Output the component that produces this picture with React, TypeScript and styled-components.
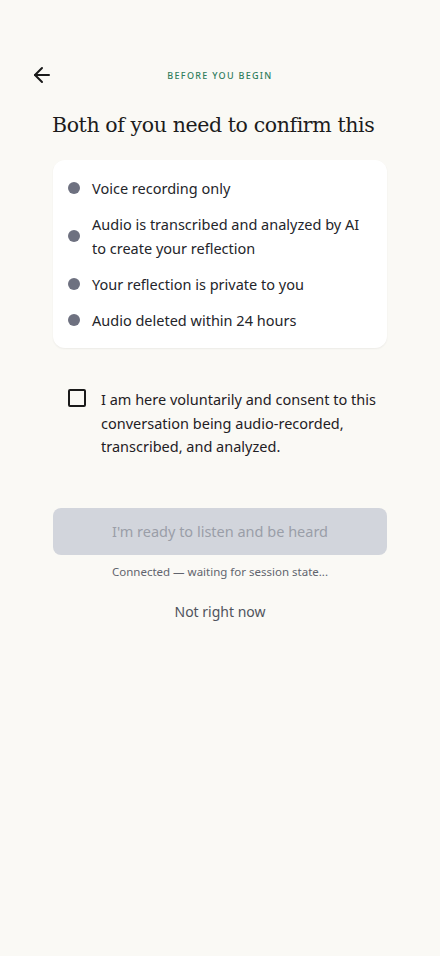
import styled, { createGlobalStyle } from "styled-components";
import { useState } from "react";
import { ArrowLeft } from "lucide-react";

const GlobalStyle = createGlobalStyle`
  html, body {
    margin: 0;
    padding: 0;
    background: #faf9f5;
  }
  * {
    box-sizing: border-box;
  }
`;

const Page = styled.div`
  min-height: 956px;
  background: #faf9f5;
  font-family: "Noto Sans", "Open Sans", sans-serif;
  color: #1f2024;
  padding: 63px 53px 40px;
  display: flex;
  flex-direction: column;
`;

const TopBar = styled.div`
  position: relative;
  display: flex;
  align-items: center;
  justify-content: center;
  height: 24px;
`;

const BackButton = styled.button`
  position: absolute;
  left: -23px;
  top: 0;
  background: none;
  border: none;
  padding: 0;
  display: flex;
  color: #1a1a1a;
  cursor: pointer;
`;

const Eyebrow = styled.div`
  font-size: 9px;
  letter-spacing: 1.3px;
  text-transform: uppercase;
  color: #2f7d5c;
  font-weight: 500;
`;

const Heading = styled.h1`
  margin: 26px 0 23px -1px;
  font-family: "DejaVu Serif", "Liberation Serif", serif;
  font-weight: 400;
  font-size: 20.5px;
  letter-spacing: -0.4px;
  text-align: left;
  color: #1c1c1c;
`;

const Card = styled.ul`
  list-style: none;
  margin: 0;
  padding: 16px 20px 16px 15px;
  background: #ffffff;
  border-radius: 12px;
  box-shadow: 0 1px 2px rgba(0, 0, 0, 0.06);
  display: flex;
  flex-direction: column;
  gap: 12px;
`;

const Item = styled.li`
  display: flex;
  align-items: center;
  gap: 12px;
  font-size: 14.5px;
  line-height: 24px;
  color: #24252a;
`;

const Dot = styled.span`
  flex: none;
  width: 12px;
  height: 12px;
  border-radius: 50%;
  background: #6e7180;
`;

const Consent = styled.label`
  display: flex;
  align-items: flex-start;
  gap: 15px;
  margin: 40px 0 0 15px;
  font-size: 14.5px;
  line-height: 23.5px;
  color: #1f2024;
  cursor: pointer;
`;

const Box = styled.span<{ $checked: boolean }>`
  flex: none;
  width: 18px;
  height: 18px;
  margin-top: 1px;
  border: 2px solid #1a1a1a;
  border-radius: 2px;
  background: ${(p) => (p.$checked ? "#1a1a1a" : "transparent")};
`;

const HiddenInput = styled.input`
  display: none;
`;

const PrimaryButton = styled.button<{ $disabled: boolean }>`
  margin-top: 49px;
  width: 100%;
  height: 47px;
  border: none;
  border-radius: 8px;
  font-family: inherit;
  font-size: 14.5px;
  background: ${(p) => (p.$disabled ? "#d2d5dc" : "#2f7d5c")};
  color: ${(p) => (p.$disabled ? "#9a9ea8" : "#ffffff")};
`;

const Status = styled.div`
  margin-top: 9px;
  text-align: center;
  font-size: 11.5px;
  color: #61646d;
`;

const Secondary = styled.button`
  margin: 22px auto 0;
  background: none;
  border: none;
  font-family: inherit;
  font-size: 14px;
  color: #50535c;
  cursor: pointer;
`;

const points = [
  "Voice recording only",
  "Audio is transcribed and analyzed by AI to create your reflection",
  "Your reflection is private to you",
  "Audio deleted within 24 hours",
];

const App = () => {
  const [agreed, setAgreed] = useState(false);

  return (
    <Page>
      <GlobalStyle />
      <TopBar>
        <BackButton aria-label="Back">
          <ArrowLeft size={24} strokeWidth={2} />
        </BackButton>
        <Eyebrow>Before you begin</Eyebrow>
      </TopBar>
      <Heading>Both of you need to confirm this</Heading>
      <Card>
        {points.map((p) => (
          <Item key={p}>
            <Dot />
            <span>{p}</span>
          </Item>
        ))}
      </Card>
      <Consent>
        <HiddenInput
          type="checkbox"
          checked={agreed}
          onChange={(e) => setAgreed(e.target.checked)}
        />
        <Box $checked={agreed} />
        <span>
          I am here voluntarily and consent to this conversation being
          audio-recorded, transcribed, and analyzed.
        </span>
      </Consent>
      <PrimaryButton $disabled={true} disabled>
        I'm ready to listen and be heard
      </PrimaryButton>
      <Status>Connected — waiting for session state...</Status>
      <Secondary>Not right now</Secondary>
    </Page>
  );
};

export default App;
